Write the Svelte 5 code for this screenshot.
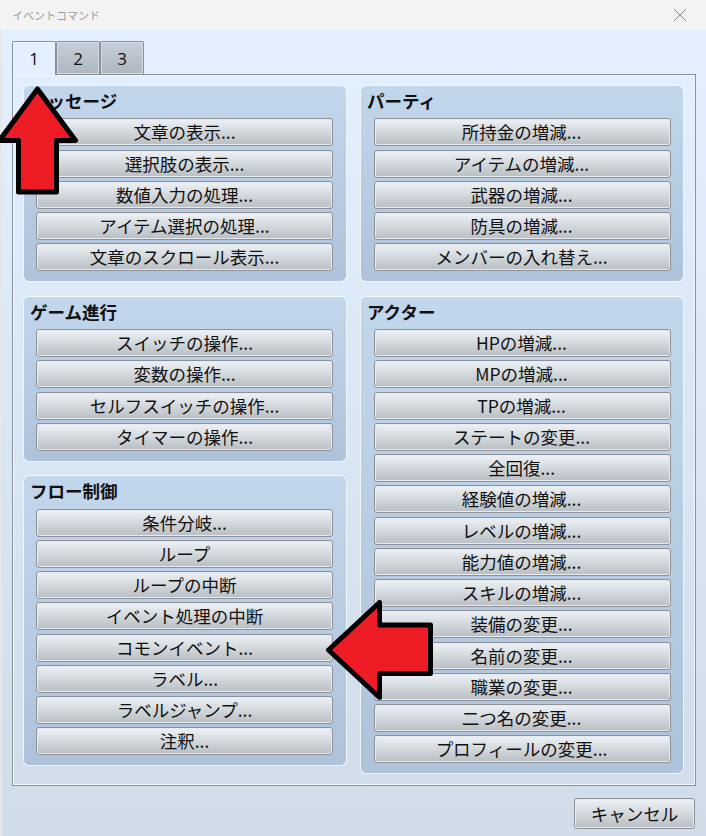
<script>
	const tabs = ['1', '2', '3'];

	const leftGroups = [
		{ title: 'メッセージ', items: ['文章の表示...', '選択肢の表示...', '数値入力の処理...', 'アイテム選択の処理...', '文章のスクロール表示...'] },
		{ title: 'ゲーム進行', items: ['スイッチの操作...', '変数の操作...', 'セルフスイッチの操作...', 'タイマーの操作...'] },
		{ title: 'フロー制御', items: ['条件分岐...', 'ループ', 'ループの中断', 'イベント処理の中断', 'コモンイベント...', 'ラベル...', 'ラベルジャンプ...', '注釈...'] }
	];

	const rightGroups = [
		{ title: 'パーティ', items: ['所持金の増減...', 'アイテムの増減...', '武器の増減...', '防具の増減...', 'メンバーの入れ替え...'] },
		{ title: 'アクター', items: ['HPの増減...', 'MPの増減...', 'TPの増減...', 'ステートの変更...', '全回復...', '経験値の増減...', 'レベルの増減...', '能力値の増減...', 'スキルの増減...', '装備の変更...', '名前の変更...', '職業の変更...', '二つ名の変更...', 'プロフィールの変更...'] }
	];
</script>

{#snippet group(g)}
	<section class="group">
		<h3>{g.title}</h3>
		{#each g.items as item}
			<button class="cmd">{item}</button>
		{/each}
	</section>
{/snippet}

<div class="window">
	<header class="titlebar">
		<span class="title">イベントコマンド</span>
		<svg class="close" width="14" height="14" viewBox="0 0 14 14">
			<path d="M1 1 L13 13 M13 1 L1 13" stroke="#8a8a8a" stroke-width="1" fill="none" />
		</svg>
	</header>

	<div class="body">
		<div class="tabs">
			{#each tabs as tab, i}
				<div class="tab" class:active={i === 0}>{tab}</div>
			{/each}
		</div>

		<div class="panel">
			<div class="column">
				{#each leftGroups as g}
					{@render group(g)}
				{/each}
			</div>
			<div class="column right">
				{#each rightGroups as g}
					{@render group(g)}
				{/each}
			</div>
		</div>

		<div class="footer">
			<button class="cancel">キャンセル</button>
		</div>
	</div>

	<svg class="arrow-up" width="90" height="112" viewBox="0 0 90 112">
		<path d="M37.5 5 L75.5 56.5 L56.5 56.5 L56.5 108 L18.5 108 L18.5 56.5 L-0.5 56.5 Z" fill="#ee1c25" stroke="#000" stroke-width="5" stroke-linejoin="round" />
	</svg>
	<svg class="arrow-left" width="112" height="104" viewBox="0 0 112 104">
		<path d="M2.5 50 L53.5 2.5 L53.5 25 L104.5 25 L104.5 73.5 L53.5 73.5 L53.5 97.5 Z" fill="#ee1c25" stroke="#000" stroke-width="5" stroke-linejoin="round" />
	</svg>
</div>

<style>
	:global(body) {
		margin: 0;
		padding: 0;
		background: #f3f3f3;
	}

	.window {
		position: relative;
		width: 706px;
		height: 836px;
		overflow: hidden;
		font-family: "Noto Sans CJK JP", "Liberation Sans", sans-serif;
		color: #111;
	}

	.titlebar {
		height: 30px;
		box-sizing: border-box;
		padding: 0 19px 0 12px;
		display: flex;
		align-items: center;
		justify-content: space-between;
		background: #f3f3f3;
	}

	.title {
		font-size: 11px;
		color: #9a9a9a;
	}

	.body {
		height: 806px;
		box-sizing: border-box;
		padding: 11px 10px 0 10px;
		border-left: 2px solid #e6e6e6;
		background: linear-gradient(#e3f0ff, #d0dce8);
	}

	.tabs {
		display: flex;
		height: 33px;
		position: relative;
		z-index: 1;
	}

	.tab {
		width: 44px;
		height: 33px;
		box-sizing: border-box;
		border: 1px solid #8b8f96;
		border-bottom: none;
		border-radius: 2px 2px 0 0;
		background: linear-gradient(#c6ced8, #aeb6c0);
		box-shadow: inset 0 0 0 1px #d5dde6;
		font-family: "Open Sans", "Liberation Sans", sans-serif;
		font-size: 17px;
		display: flex;
		align-items: center;
		justify-content: center;
	}

	.tab.active {
		height: 34px;
		background: #e3f0ff;
		box-shadow: inset 0 1px 0 #f4f9ff;
	}

	.panel {
		height: 712px;
		box-sizing: border-box;
		border: 1px solid #8b8f96;
		padding: 10px 11px 0 10px;
		display: flex;
		gap: 13px;
		align-items: flex-start;
		box-shadow: inset 0 0 0 1px #f2f8ff;
	}

	.column {
		width: 324px;
		display: flex;
		flex-direction: column;
		gap: 13.5px;
	}

	.group {
		box-sizing: border-box;
		padding: 0 13px 10px 12px;
		border: 1px solid #f0f6fd;
		border-top-color: #f6faff;
		border-radius: 6px;
		background: linear-gradient(#c2d6ec, #aec3d9);
		display: flex;
		flex-direction: column;
		gap: 3.25px;
	}

	.right .group {
		padding-left: 13px;
		padding-right: 12px;
	}

	h3 {
		margin: 0;
		height: 29px;
		margin-left: -6px;
		font-size: 17.5px;
		font-weight: 700;
		line-height: 29px;
		color: #111;
	}

	.right h3 {
		margin-left: -7px;
	}

	button {
		font-family: inherit;
		color: #111;
		padding: 0;
		cursor: default;
		box-sizing: border-box;
		border: 1px solid #8e9298;
		border-radius: 3px;
		background: linear-gradient(#eef2f6, #b9bec4);
		box-shadow: inset 0 0 0 1px #e7ebef;
	}

	.cmd {
		width: 297px;
		height: 28px;
		font-size: 17.5px;
		line-height: 24px;
	}

	.right .cmd {
		padding-right: 2px;
	}

	.footer {
		display: flex;
		justify-content: flex-end;
		padding-top: 12px;
	}

	.cancel {
		width: 121px;
		height: 31px;
		margin-right: 1px;
		font-size: 17.5px;
	}

	.arrow-up {
		position: absolute;
		left: 0;
		top: 84px;
	}

	.arrow-left {
		position: absolute;
		left: 326px;
		top: 600px;
	}

	.close {
		display: block;
	}
</style>
